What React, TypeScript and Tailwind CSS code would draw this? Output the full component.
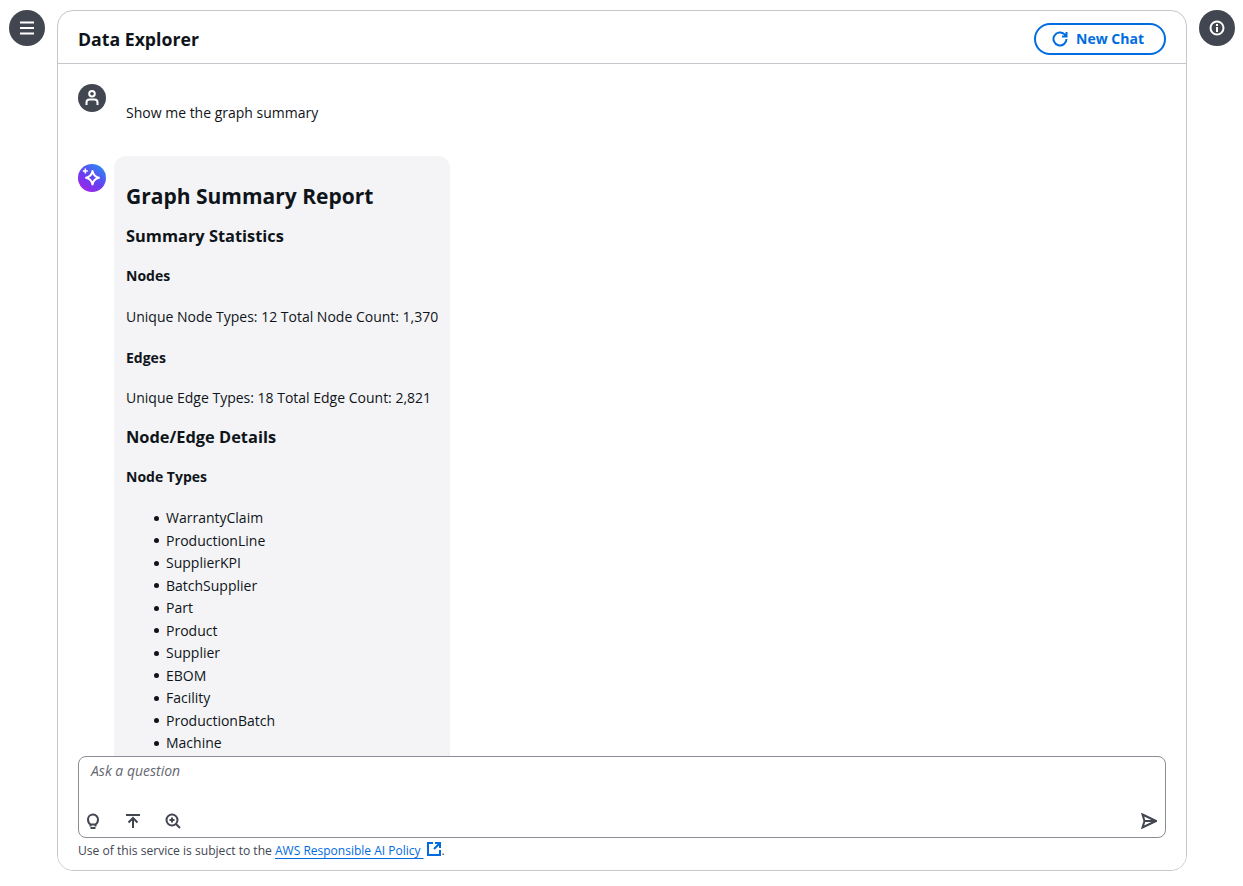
const nodeTypes = [
  'WarrantyClaim',
  'ProductionLine',
  'SupplierKPI',
  'BatchSupplier',
  'Part',
  'Product',
  'Supplier',
  'EBOM',
  'Facility',
  'ProductionBatch',
  'Machine',
];

function Icon({ d, className }: { d: string; className?: string }) {
  return (
    <svg width="16" height="16" viewBox="0 0 16 16" fill="none" stroke="currentColor" strokeWidth="2" className={className}>
      <path d={d} />
    </svg>
  );
}

function InfoIcon() {
  return (
    <svg width="16" height="16" viewBox="0 0 16 16" fill="none" stroke="currentColor" strokeWidth="2">
      <circle cx="8" cy="8" r="6.500" />
      <path d="M8 7v5M8 4v2" />
    </svg>
  );
}

function ZoomIcon() {
  return (
    <svg width="16" height="16" viewBox="0 0 16 16" fill="none" stroke="currentColor" strokeWidth="2">
      <circle cx="7" cy="7" r="5.500" />
      <path d="M11 11l4 4M4.500 7h5M7 4.500v5" />
    </svg>
  );
}

function UserAvatar() {
  return (
    <div className="flex h-7 w-7 shrink-0 items-center justify-center rounded-full bg-[#424650] text-white">
      <svg width="16" height="16" viewBox="0 0 16 16" fill="none" stroke="currentColor" strokeWidth="2">
        <circle cx="8" cy="3.800" r="2.800" />
        <path d="M2.500 15v-2.500a3 3 0 0 1 3-3h5a3 3 0 0 1 3 3V15" />
      </svg>
    </div>
  );
}

function SparkleAvatar() {
  return (
    <div className="flex h-7 w-7 shrink-0 items-center justify-center rounded-full bg-[linear-gradient(215deg,#1f9af5_0%,#6a3cf0_55%,#b01fe6_100%)]">
      <svg width="28" height="28" viewBox="0 0 28 28" fill="none" stroke="white" strokeLinejoin="round">
        <path strokeWidth="2" d="M14.500 7c.8 4.300 2.400 5.900 6.500 6.800-4.100.9-5.700 2.500-6.500 6.800-.8-4.300-2.400-5.900-6.500-6.800 4.100-.9 5.700-2.500 6.500-6.800Z" />
        <path strokeWidth="1.600" d="M7.300 4.500v5M4.800 7h5" />
      </svg>
    </div>
  );
}

export default function App() {
  return (
    <div className="flex h-[886px] w-full overflow-hidden bg-white font-['Open_Sans',sans-serif] text-sm text-[#0f141a]">
      <div className="w-[57px] shrink-0 pl-[9px] pt-[10px]">
        <button className="flex h-9 w-9 items-center justify-center rounded-full bg-[#424650] text-white">
          <Icon d="M1 2.500h14M1 8h14M1 13.500h14" />
        </button>
      </div>

      <div className="mb-[15px] mt-[10px] flex w-[1130px] shrink-0 flex-col overflow-hidden rounded-2xl border border-[#c6c6cd]">
        <header className="flex h-[53px] shrink-0 items-center justify-between border-b border-[#c6c6cd] px-5 pt-1">
          <h1 className="text-[17.700px] font-bold leading-[22px]">Data Explorer</h1>
          <button className="flex h-8 w-[132px] items-center justify-center gap-2 rounded-full border-2 border-[#006ce0] pr-1 text-sm font-bold text-[#006ce0]">
            <Icon d="M14.500 8A6.500 6.500 0 1 1 12.600 3.400L14.500 5.500M14.500 1v4.500H10" />
            New Chat
          </button>
        </header>

        <main className="min-h-0 flex-1 overflow-hidden pl-5 pt-5">
          <div className="flex">
            <UserAvatar />
            <p className="ml-5 mt-[18px] leading-[22px]">Show me the graph summary</p>
          </div>

          <div className="mt-[32px] flex">
            <div className="pt-2">
              <SparkleAvatar />
            </div>
            <div className="ml-2 w-[336px] rounded-t-xl bg-[#f4f4f6] px-3 pb-10 pt-[25px]">
              <h2 className="text-[21px] font-bold leading-[30px]">Graph Summary Report</h2>
              <h3 className="mt-[15px] text-[16.400px] font-bold leading-[20px]">Summary Statistics</h3>
              <h4 className="mt-[19px] font-bold leading-[22px]">Nodes</h4>
              <p className="mt-[19px] whitespace-nowrap leading-[22px]">Unique Node Types: 12 Total Node Count: 1,370</p>
              <h4 className="mt-[19px] font-bold leading-[22px]">Edges</h4>
              <p className="mt-[18px] whitespace-nowrap leading-[22px]">Unique Edge Types: 18 Total Edge Count: 2,821</p>
              <h3 className="mt-[18px] text-[16.400px] font-bold leading-[20px]">Node/Edge Details</h3>
              <h4 className="mt-[19px] font-bold leading-[22px]">Node Types</h4>
              <ul className="mt-[19px] pl-7">
                {nodeTypes.map((t) => (
                  <li key={t} className="flex items-center leading-[22.500px]">
                    <span className="mr-[7px] h-[5px] w-[5px] rounded-full bg-[#0f141a]" />
                    {t}
                  </li>
                ))}
              </ul>
            </div>
          </div>
        </main>

        <div className="relative z-10 bg-white px-5 pb-[9px]">
          <div className="flex h-[82px] flex-col justify-between rounded-lg border border-[#8c8c94] px-3 pb-2 pt-1">
            <span className="text-sm italic leading-5 text-[#656871]">Ask a question</span>
            <div className="flex items-center justify-between text-[#424650]">
              <div className="-ml-[6px] flex items-center gap-6">
                <Icon d="M5.500 15h5M5.500 11.500C4 10.500 3 8.800 3 6.500a5 5 0 0 1 10 0c0 2.300-1 4-2.500 5ZM5.500 11.500v2M10.500 11.500v2" />
                <Icon d="M1 2h14M8 15V5M3.500 9.500 8 5l4.500 4.500" />
                <ZoomIcon />
              </div>
              <Icon d="M1.500 1.500 15 8 1.500 14.500 3.500 8ZM3.500 8H15" className="-mr-1" />
            </div>
          </div>
          <p className="mt-[3px] h-5 whitespace-nowrap text-[12.100px] leading-[20px] text-[#424650]">
            Use of this service is subject to the{' '}
            <a href="#" className="text-xs text-[#006ce0]">
              <span className="underline underline-offset-[3px]">AWS Responsible AI Policy </span>
              <Icon d="M7 2H2v12h12V9M9 2h5v5M14 2 8 8" className="ml-[2px] inline align-[-2px]" />
            </a>
            .
          </p>
        </div>
      </div>

      <div className="pl-3 pt-[10px]">
        <button className="flex h-9 w-9 items-center justify-center rounded-full bg-[#424650] text-white">
          <InfoIcon />
        </button>
      </div>
    </div>
  );
}
